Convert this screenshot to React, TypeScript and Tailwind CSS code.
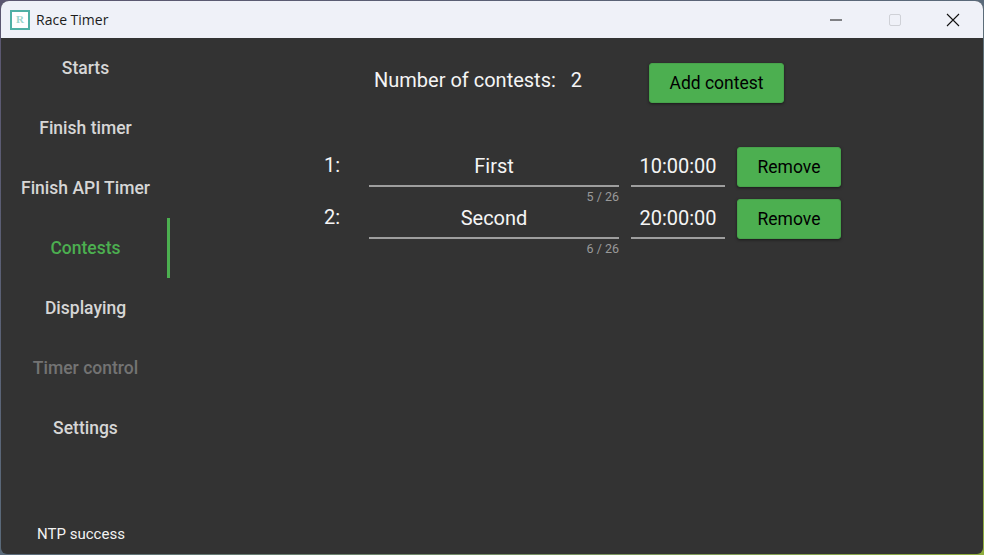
import React from "react";

const navItems = [
  { label: "Starts", tone: "text-[#d6d6d6]" },
  { label: "Finish timer", tone: "text-[#d6d6d6]" },
  { label: "Finish API Timer", tone: "text-[#d6d6d6]" },
  { label: "Contests", tone: "text-[#4caf50]", active: true },
  { label: "Displaying", tone: "text-[#d6d6d6]" },
  { label: "Timer control", tone: "text-[#737373]" },
  { label: "Settings", tone: "text-[#d6d6d6]" },
];

const contests = [
  { index: "1:", name: "First", time: "10:00:00", count: "5 / 26" },
  { index: "2:", name: "Second", time: "20:00:00", count: "6 / 26" },
];

function GreenButton({ label, className }: { label: string; className: string }) {
  return (
    <button
      className={`h-10 rounded-[3px] border border-[#47a34b] bg-[#4caf50] text-[17.5px] font-[450] text-black shadow-[0_1px_3px_rgba(0,0,0,0.5)] ${className}`}
    >
      {label}
    </button>
  );
}

function TitleBar() {
  return (
    <div className="flex h-[37px] shrink-0 items-center bg-[#eff1f8] pl-[9px]">
      <div className="flex size-5 items-center justify-center border-2 border-[#4fb0a5] bg-white">
        <span className="font-['Liberation_Serif',serif] text-[11px] font-bold text-[#9bd6cd]">R</span>
      </div>
      <span className="ml-[6px] font-['Open_Sans',sans-serif] text-[14px] text-[#1c1c1c]">Race Timer</span>
      <div className="ml-auto flex items-center">
        <div className="flex w-[58px] justify-center pr-[3px]">
          <svg width="12" height="12" viewBox="0 0 12 12">
            <path d="M0 6h12" stroke="#111" strokeWidth="1" />
          </svg>
        </div>
        <div className="flex w-[58px] justify-center pr-[1px]">
          <div className="size-3 rounded-[2px] border-[1.5px] border-[#cfd1d7]" />
        </div>
        <div className="flex w-[59px] justify-center pr-[2px]">
          <svg width="14" height="14" viewBox="0 0 14 14">
            <path d="M1 1l12 12M13 1L1 13" stroke="#111" strokeWidth="1.1" />
          </svg>
        </div>
      </div>
    </div>
  );
}

function Sidebar() {
  return (
    <div className="flex w-[169px] shrink-0 flex-col">
      {navItems.map((item) => (
        <div
          key={item.label}
          className={`flex h-[60px] items-center justify-center text-[17.5px] font-medium ${item.tone} ${
            item.active ? "border-r-[3px] border-[#4caf50] pl-[3px]" : ""
          }`}
        >
          {item.label}
        </div>
      ))}
      <div className="mt-auto flex h-[36px] justify-center pr-[9px] pt-[5px] text-[15px] text-[#f2f2f2]">
        NTP success
      </div>
    </div>
  );
}

export default function App() {
  return (
    <div className="h-[555px] w-[984px] overflow-hidden bg-gradient-to-br from-[#5b5670] via-[#5a6a7a] to-[#8fae3c] p-[1px]">
      <div className="flex h-full flex-col overflow-hidden rounded-t-[8px] rounded-b-[6px] bg-[#333333] font-['Roboto',sans-serif]">
        <TitleBar />
        <div className="flex min-h-0 flex-1">
          <Sidebar />
          <div className="flex flex-1 flex-col pl-[154px]">
            <div className="flex h-[65px] items-start pt-[25px]">
              <div className="ml-[50px] flex h-10 w-[275px] items-start pt-[3px] text-[20px] leading-[28px] text-[#f5f5f5]">
                <span>Number of contests:</span>
                <span className="ml-[15px]">2</span>
              </div>
              <GreenButton label="Add contest" className="w-[135px]" />
            </div>
            <div className="mt-[44px] flex flex-col gap-3">
              {contests.map((c) => (
                <div key={c.index} className="flex h-10 items-start">
                  <span className="w-[45px] text-[20px] leading-[36px] text-[#f5f5f5]">{c.index}</span>
                  <div className="relative h-10 w-[250px] border-b-2 border-[#9e9e9e] text-center text-[20px] leading-[38px] text-[#f5f5f5]">
                    {c.name}
                    <span className="absolute right-0 top-[42px] text-[12.5px] leading-[16px] text-[#9a9a9a]">
                      {c.count}
                    </span>
                  </div>
                  <div className="ml-3 h-10 w-[94px] border-b-2 border-[#9e9e9e] text-center text-[20px] leading-[38px] text-[#f5f5f5]">
                    {c.time}
                  </div>
                  <GreenButton label="Remove" className="ml-3 w-[104px]" />
                </div>
              ))}
            </div>
          </div>
        </div>
      </div>
    </div>
  );
}
